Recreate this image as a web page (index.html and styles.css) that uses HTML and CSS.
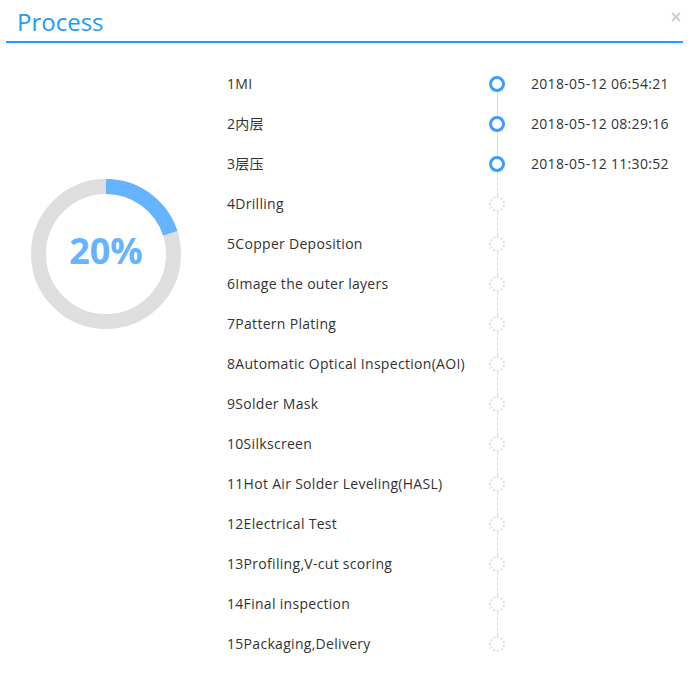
FILE: index.html
```html
<!DOCTYPE html>
<html>
<head>
<meta charset="utf-8">
<link rel="stylesheet" href="styles.css">
</head>
<body>
<div class="dialog">
  <header class="head">
    <h1 class="title">Process</h1>
    <span class="close" aria-label="close"><svg width="10" height="10" viewBox="0 0 10 10"><path d="M1 1L9 9M9 1L1 9" stroke="#cfcfcf" stroke-width="2"/></svg></span>
  </header>
  <main class="body">
    <section class="progress">
      <div class="donut">
        <svg width="150" height="150" viewBox="0 0 150 150">
          <circle cx="75" cy="75" r="67.5" fill="none" stroke="#dedede" stroke-width="15"/>
          <circle cx="75" cy="75" r="67.5" fill="none" stroke="#66b3ff" stroke-width="15" stroke-dasharray="84.8 424.1" transform="rotate(-90 75 75)"/>
        </svg>
        <span class="pct">20%</span>
      </div>
    </section>
    <ol class="steps">
      <li class="step done"><span class="name">1MI</span><span class="dot"></span><span class="time">2018-05-12 06:54:21</span></li>
      <li class="step done"><span class="name">2内层</span><span class="dot"></span><span class="time">2018-05-12 08:29:16</span></li>
      <li class="step done next-todo"><span class="name">3层压</span><span class="dot"></span><span class="time">2018-05-12 11:30:52</span></li>
      <li class="step"><span class="name">4Drilling</span><span class="dot"></span><span class="time"></span></li>
      <li class="step"><span class="name">5Copper Deposition</span><span class="dot"></span><span class="time"></span></li>
      <li class="step"><span class="name">6Image the outer layers</span><span class="dot"></span><span class="time"></span></li>
      <li class="step"><span class="name">7Pattern Plating</span><span class="dot"></span><span class="time"></span></li>
      <li class="step"><span class="name">8Automatic Optical Inspection(AOI)</span><span class="dot"></span><span class="time"></span></li>
      <li class="step"><span class="name">9Solder Mask</span><span class="dot"></span><span class="time"></span></li>
      <li class="step"><span class="name">10Silkscreen</span><span class="dot"></span><span class="time"></span></li>
      <li class="step"><span class="name">11Hot Air Solder Leveling(HASL)</span><span class="dot"></span><span class="time"></span></li>
      <li class="step"><span class="name">12Electrical Test</span><span class="dot"></span><span class="time"></span></li>
      <li class="step"><span class="name">13Profiling,V-cut scoring</span><span class="dot"></span><span class="time"></span></li>
      <li class="step"><span class="name">14Final inspection</span><span class="dot"></span><span class="time"></span></li>
      <li class="step last"><span class="name">15Packaging,Delivery</span><span class="dot"></span><span class="time"></span></li>
    </ol>
  </main>
</div>
</body>
</html>
```
FILE: styles.css
```css
* { box-sizing: border-box; }
html, body { margin: 0; padding: 0; }
html { background: #fff; }
body {
  font-family: "Open Sans", "Noto Sans CJK SC", sans-serif;
  color: #333;
}
.dialog { width: 690px; height: 685px; }
.head {
  margin: 0 7px 0 6px;
  height: 43px;
  border-bottom: 2px solid #1e9fff;
  display: flex;
  align-items: flex-start;
  justify-content: space-between;
}
.title {
  margin: 0;
  padding: 3px 0 0 11px;
  font-size: 24px;
  line-height: 38px;
  font-weight: 400;
  color: #1a9cfb;
}
.close {
  display: flex;
  margin-top: 12px;
  margin-right: 2px;
}
.body {
  display: flex;
  padding-top: 21px;
}
.progress {
  width: 227px;
  padding: 115px 0 0 31px;
}
.donut {
  position: relative;
  width: 150px;
  height: 150px;
}
.donut svg { display: block; }
.pct {
  position: absolute;
  inset: 0;
  display: flex;
  align-items: center;
  justify-content: center;
  padding-bottom: 8px;
  font-size: 36px;
  font-weight: 700;
  color: #66b3ff;
}
.steps {
  list-style: none;
  margin: 0;
  padding: 0;
}
.step {
  display: grid;
  grid-template-columns: 262px 16px auto;
  align-items: center;
  height: 40px;
  font-size: 14px;
  letter-spacing: 0.3px;
}
.name, .time { line-height: 20px; }
.time { margin-left: 26px; }
.dot {
  position: relative;
  width: 16px;
  height: 16px;
  border-radius: 50%;
  border: 2px dotted #e0e0e0;
  background: #fff;
}
.step.done .dot {
  border: 3px solid #3d9cff;
}
.dot::before {
  content: "";
  position: absolute;
  left: 6px;
  top: 14px;
  height: 24px;
  border-left: 1px dashed #dcdcdc;
}
.step.done .dot::before {
  left: 5px;
  top: 13px;
  border-left: 1px solid #d8d8d8;
}
.step.done.next-todo .dot::before {
  border-left: 1px dashed #dcdcdc;
}
.step.last .dot::before { display: none; }
```
